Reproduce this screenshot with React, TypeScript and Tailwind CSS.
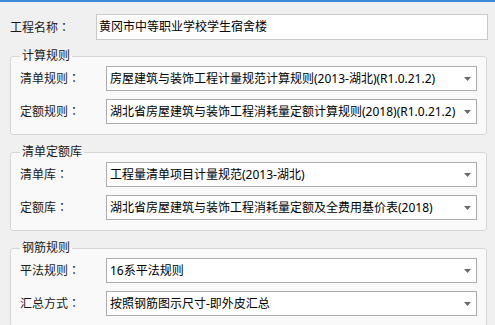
import React from 'react';

const font = { fontFamily: '"Noto Sans", "Noto Sans CJK SC", sans-serif' };

// centred full-width colon, as the Windows UI font draws it
const Label = ({ text, className }: { text: string; className: string }) => (
  <span className={`text-[12px] text-[#1a1a1a] ${className}`}>
    {text}
    <span className="font-['Noto_Sans_CJK_TC',sans-serif]">：</span>
  </span>
);

const SelectBox = ({ value }: { value: string }) => (
  <div className="flex h-[25px] flex-1 items-center justify-between border border-[#acacac] bg-white pl-[3px] pr-[4px]">
    <span className="whitespace-nowrap text-[12px] leading-none text-black">{value}</span>
    <svg width="7" height="4" viewBox="0 0 7 4" className="mr-[1px]">
      <path d="M0 0 H7 L3.5 4 Z" fill="#6a6a6a" />
    </svg>
  </div>
);

const Row = ({ label, value }: { label: string; value: string }) => (
  <div className="flex items-center">
    <Label text={label} className="w-[86px]" />
    <SelectBox value={value} />
  </div>
);

const Group = ({
  title,
  rows,
  className,
}: {
  title: string;
  rows: { label: string; value: string }[];
  className: string;
}) => (
  <fieldset
    className={`ml-[10px] mr-[8px] rounded-[3px] border border-[#d6d6d6] bg-[#f9f9f9] ${className}`}
  >
    <legend className="ml-[9px] px-[2px] text-[12px] leading-[16px] text-[#1a1a1a]">{title}</legend>
    <div className="flex flex-col gap-[8px] pb-[10px] pl-[9px] pr-[9px] pt-[2px]">
      {rows.map((r) => (
        <Row key={r.label} label={r.label} value={r.value} />
      ))}
    </div>
  </fieldset>
);

export default function App() {
  return (
    <div className="h-[325px] w-[495px] overflow-hidden bg-[#f0f0f0]" style={font}>
      <div className="h-[2px] bg-[#3b8ad9]" />

      {/* 工程名称 */}
      <div className="mt-[12px] flex items-center pl-[10px]">
        <Label text="工程名称" className="w-[86px]" />
        <div className="flex h-[26px] w-[392px] items-center border border-[#c9c9c9] bg-white pl-[2px]">
          <span className="text-[12px] leading-none text-black">黄冈市中等职业学校学生宿舍楼</span>
        </div>
      </div>

      <Group
        title="计算规则"
        className="mt-[8px]"
        rows={[
          { label: '清单规则', value: '房屋建筑与装饰工程计量规范计算规则(2013-湖北)(R1.0.21.2)' },
          { label: '定额规则', value: '湖北省房屋建筑与装饰工程消耗量定额计算规则(2018)(R1.0.21.2)' },
        ]}
      />

      <Group
        title="清单定额库"
        className="mt-[9px]"
        rows={[
          { label: '清单库', value: '工程量清单项目计量规范(2013-湖北)' },
          { label: '定额库', value: '湖北省房屋建筑与装饰工程消耗量定额及全费用基价表(2018)' },
        ]}
      />

      <Group
        title="钢筋规则"
        className="mt-[9px]"
        rows={[
          { label: '平法规则', value: '16系平法规则' },
          { label: '汇总方式', value: '按照钢筋图示尺寸-即外皮汇总' },
        ]}
      />
    </div>
  );
}
